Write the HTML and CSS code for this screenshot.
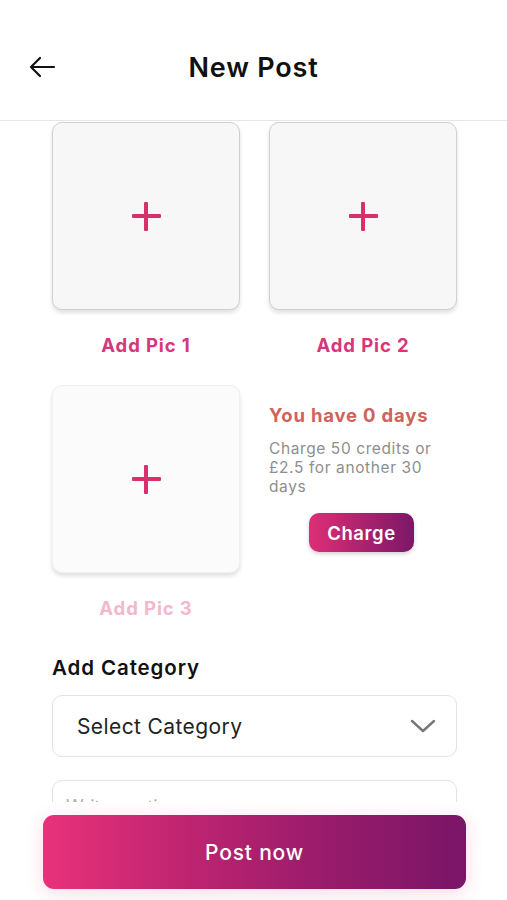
FILE: index.html
```html
<!DOCTYPE html>
<html>
<head>
<meta charset="utf-8">
<link rel="stylesheet" href="styles.css">
</head>
<body>
<div class="app">
  <header class="header">
    <svg class="back" width="28" height="22" viewBox="0 0 28 22"><path d="M26 11H3M12 2L3 11l9 9" fill="none" stroke="#111" stroke-width="2.2" stroke-linecap="round" stroke-linejoin="round"/></svg>
    <h1 class="title">New Post</h1>
  </header>
  <main class="content">
    <div class="grid">
      <div class="cell">
        <div class="pic"><span class="plus"></span></div>
        <div class="pic-label">Add Pic 1</div>
      </div>
      <div class="cell">
        <div class="pic"><span class="plus"></span></div>
        <div class="pic-label">Add Pic 2</div>
      </div>
      <div class="cell">
        <div class="pic pic-light"><span class="plus"></span></div>
        <div class="pic-label pic-label-light">Add Pic 3</div>
      </div>
      <div class="info">
        <div class="days">You have 0 days</div>
        <p class="charge-text">Charge 50 credits or £2.5 for another 30 days</p>
        <button class="charge">Charge</button>
      </div>
    </div>
    <h2 class="section">Add Category</h2>
    <div class="select">
      <span>Select Category</span>
      <svg width="26" height="16" viewBox="0 0 26 16"><path d="M2 3l11 10L24 3" fill="none" stroke="#777" stroke-width="2.4" stroke-linecap="round" stroke-linejoin="round"/></svg>
    </div>
    <div class="caption"><span>Write caption...</span></div>
  </main>
  <footer class="footer">
    <button class="post">Post now</button>
  </footer>
</div>
</body>
</html>
```
FILE: styles.css
```css
* { box-sizing: border-box; }
html, body { margin: 0; padding: 0; background: #fff; }
body { font-family: Inter, "Noto Sans", sans-serif; }
.app { width: 507px; height: 900px; display: flex; flex-direction: column; overflow: hidden; }
.header {
  height: 121px; flex: none; border-bottom: 1px solid #e6e6e6;
  display: flex; align-items: center; justify-content: center; position: relative;
  padding-top: 14px;
}
.back { position: absolute; left: 28px; top: 56px; }
.title { margin: 0; font-size: 27px; font-weight: 600; color: #111; letter-spacing: 0.8px; }
.content { flex: 1; overflow: hidden; padding: 1px 50px 0 52px; }
.grid { display: grid; grid-template-columns: 188px 188px; column-gap: 29px; row-gap: 29px; }
.cell { display: flex; flex-direction: column; align-items: center; }
.pic {
  width: 188px; height: 188px; border-radius: 10px; background: #f7f7f8;
  border: 1.5px solid #cfcfcf; box-shadow: 0 3px 4px rgba(0,0,0,0.12);
  display: flex; align-items: center; justify-content: center;
}
.pic-light { border: 1px solid #f0f0f0; background: #fbfbfb; box-shadow: 0 3px 4px rgba(0,0,0,0.13); }
.plus { position: relative; width: 29px; height: 29px; }
.plus::before, .plus::after { content: ""; position: absolute; background: #d8306c; border-radius: 1px; }
.plus::before { left: 0; right: 0; top: 12.5px; height: 4px; }
.plus::after { top: 0; bottom: 0; left: 12.5px; width: 4px; }
.pic-label { margin-top: 24px; font-size: 18.5px; font-weight: 700; color: #d8367a; line-height: 22px; letter-spacing: 0.9px; }
.pic-label-light { color: #f2b8cf; }
.info { padding-top: 19px; display: flex; flex-direction: column; }
.days { font-size: 18.5px; font-weight: 700; color: #d0625c; line-height: 22px; letter-spacing: 0.8px; }
.charge-text { margin: 13px 0 0; font-size: 15.5px; line-height: 19px; color: #8e8e8e; width: 180px; letter-spacing: 0.6px; }
.charge {
  align-self: center; margin: 17px 0 0 -3px; width: 105px; height: 39px; border: 0; border-radius: 10px;
  background: linear-gradient(90deg, #dd2f75, #7c1767); color: #fff;
  font-family: inherit; font-size: 18.5px; font-weight: 600; letter-spacing: 0.6px; box-shadow: 0 2px 4px rgba(0,0,0,0.18);
}
.section { margin: 37px 0 0; font-size: 20.5px; font-weight: 600; color: #111; line-height: 24px; letter-spacing: 0.9px; }
.select {
  margin-top: 15px; height: 62px; border: 1px solid #e2e2e2; border-radius: 10px;
  display: flex; align-items: center; justify-content: space-between; padding: 0 20px 0 24px;
  font-size: 21px; color: #222; letter-spacing: 0.4px;
}
.caption {
  margin-top: 23px; height: 62px; border: 1px solid #e2e2e2; border-radius: 10px;
  padding: 15px 0 0 13px; font-size: 18px; color: #b0b0b0;
}
.footer { height: 98px; flex: none; padding: 13px 41px 0 43px; }
.post {
  width: 100%; height: 74px; border: 0; border-radius: 11px;
  background: linear-gradient(90deg, #e8327a, #bd2470 35%, #951b6a 70%, #7a1567);
  color: #fff; font-family: inherit; font-size: 21px; font-weight: 500; letter-spacing: 0.8px;
  box-shadow: 0 4px 18px rgba(232,50,122,0.18);
}
```
